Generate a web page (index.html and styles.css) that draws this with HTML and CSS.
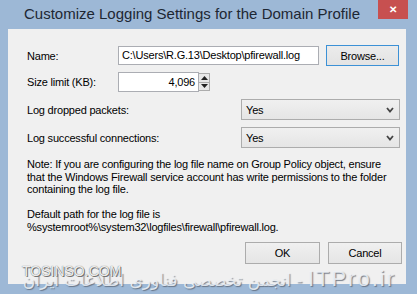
FILE: index.html
```html
<!DOCTYPE html>
<html lang="en">

<head>
    <meta charset="UTF-8">
    <title>Customize Logging Settings for the Domain Profile</title>
    <link rel="stylesheet" href="styles.css">
</head>

<body>
    <div class="window">
        <div class="titlebar">
            <span class="title">Customize Logging Settings for the Domain Profile</span>
            <span class="close">&#x2715;</span>
        </div>

        <div class="panel">
            <div class="row">
                <label class="label" for="name">Name:</label>
                <div class="field name-field" id="name">C:\Users\R.G.13\Desktop\pfirewall.log</div>
                <button class="btn browse">Browse...</button>
            </div>
            <div class="row row-size">
                <label class="label" for="size">Size limit (KB):</label>
                <div class="field size-field" id="size">4,096</div>
                <div class="spinner">
                    <span class="spin-up"><svg width="7" height="4" viewBox="0 0 7 4"><polygon points="0,4 7,4 3.5,0" fill="#222"/></svg></span>
                    <span class="spin-down"><svg width="7" height="4" viewBox="0 0 7 4"><polygon points="0,0 7,0 3.5,4" fill="#222"/></svg></span>
                </div>
            </div>
            <div class="row row-select">
                <span class="select-label">Log dropped packets:</span>
                <div class="select">
                    <span>Yes</span>
                    <svg class="chevron" width="8" height="6" viewBox="0 0 8 6"><polyline points="1,1 4,4.5 7,1" fill="none" stroke="#444" stroke-width="1.8"/></svg>
                </div>
            </div>
            <div class="row row-select">
                <span class="select-label">Log successful connections:</span>
                <div class="select">
                    <span>Yes</span>
                    <svg class="chevron" width="8" height="6" viewBox="0 0 8 6"><polyline points="1,1 4,4.5 7,1" fill="none" stroke="#444" stroke-width="1.8"/></svg>
                </div>
            </div>

            <p class="note">Note: If you are configuring the log file name on Group Policy object, ensure<br>that the Windows Firewall service account has write permissions to the folder<br>containing the log file.</p>
            <p class="note path">Default path for the log file is<br>%systemroot%\system32\logfiles\firewall\pfirewall.log.</p>

            <div class="actions">
                <button class="btn ok">OK</button>
                <button class="btn cancel">Cancel</button>
            </div>
        </div>

        <div class="watermark">
            <span class="wm-fa" dir="rtl"><span class="wm-en">ITPro.ir</span> - انجمن تخصصی فناوری اطلاعات ایران</span>
            <span class="wm-site">TOSINSO.COM</span>
        </div>
    </div>
</body>

</html>
```

FILE: styles.css
```css
body {
    margin: 0;
    font-family: "Liberation Sans", Arial, sans-serif;
    background: #9db8d6;
}

.window {
    position: relative;
    width: 417px;
    height: 294px;
    background: #9db8d6;
    overflow: hidden;
}

.titlebar {
    display: flex;
    height: 29px;
}

.title {
    flex: 1;
    padding: 6px 0 0 24px;
    font-size: 15px;
    line-height: 16px;
    color: #1d2733;
}

.close {
    width: 30px;
    height: 19px;
    margin-right: 9px;
    background: #c75050;
    color: #fff;
    font-size: 10px;
    font-weight: bold;
    line-height: 19px;
    text-align: center;
}

.panel {
    box-sizing: border-box;
    width: 398px;
    height: 255px;
    margin-left: 8px;
    padding: 16px 6px 0 19px;
    background: #f0f0f0;
    font-size: 11px;
    letter-spacing: -0.2px;
    color: #000;
}

.row {
    display: flex;
    align-items: center;
    height: 21px;
}

.row-size {
    height: 20px;
    margin-top: 6px;
}

.row-select {
    margin-top: 7px;
}

.label {
    width: 91px;
    flex-shrink: 0;
}

.select-label {
    white-space: nowrap;
}

.field {
    box-sizing: border-box;
    height: 19px;
    padding: 0 3px;
    border: 1px solid #abadb3;
    background: #fff;
    line-height: 17px;
    white-space: nowrap;
    overflow: hidden;
}

.name-field {
    width: 201px;
}

.size-field {
    width: 81px;
    height: 20px;
    line-height: 18px;
    text-align: right;
}

.spinner {
    display: flex;
    flex-direction: column;
    box-sizing: border-box;
    width: 11px;
    height: 18px;
    border: 1px solid #acacac;
    border-left: none;
    background: #e8e8e8;
}

.spinner span {
    flex: 1;
    display: flex;
    align-items: center;
    justify-content: center;
}

.spin-up {
    border-bottom: 1px solid #acacac;
}

.btn {
    box-sizing: border-box;
    height: 22px;
    padding: 0;
    border: 1px solid #acacac;
    background: linear-gradient(#f0f0f0, #e5e5e5);
    font-family: inherit;
    font-size: 11px;
    letter-spacing: -0.2px;
    color: #000;
}

.browse {
    width: 73px;
    height: 21px;
    margin-left: 7px;
    border-color: #3c91d6;
    background: linear-gradient(#ececec, #e3e3e3);
}

.select {
    display: flex;
    align-items: center;
    justify-content: space-between;
    box-sizing: border-box;
    width: 159px;
    height: 21px;
    margin-left: auto;
    padding: 0 5px 0 4px;
    border: 1px solid #acacac;
    background: linear-gradient(#f0f0f0, #e5e5e5);
}

.note {
    margin: 10px 0 0;
    line-height: 12.5px;
}

.path {
    margin-top: 12.5px;
}

.actions {
    display: flex;
    justify-content: flex-end;
    gap: 8px;
    margin: 9px -2px 0 0;
}

.ok {
    width: 75px;
}

.cancel {
    width: 74px;
}

.watermark {
    position: absolute;
    left: 20px;
    right: 20px;
    top: 260px;
    height: 32px;
}

.wm-site {
    position: absolute;
    left: 2px;
    top: 3px;
    font-size: 14px;
    color: rgba(255, 255, 255, 0.9);
    text-shadow: 0 0 1px #555, 1px 1px 0 #777;
}

.wm-fa {
    position: absolute;
    right: 1px;
    top: 6px;
    font-family: "DejaVu Sans", sans-serif;
    font-size: 17px;
    white-space: nowrap;
    color: rgba(240, 243, 247, 0.85);
    text-shadow: 1px 1px 1px rgba(90, 100, 115, 0.8);
}

.wm-en {
    font-family: "Liberation Sans", Arial, sans-serif;
    font-size: 22px;
    letter-spacing: 2px;
}
```
